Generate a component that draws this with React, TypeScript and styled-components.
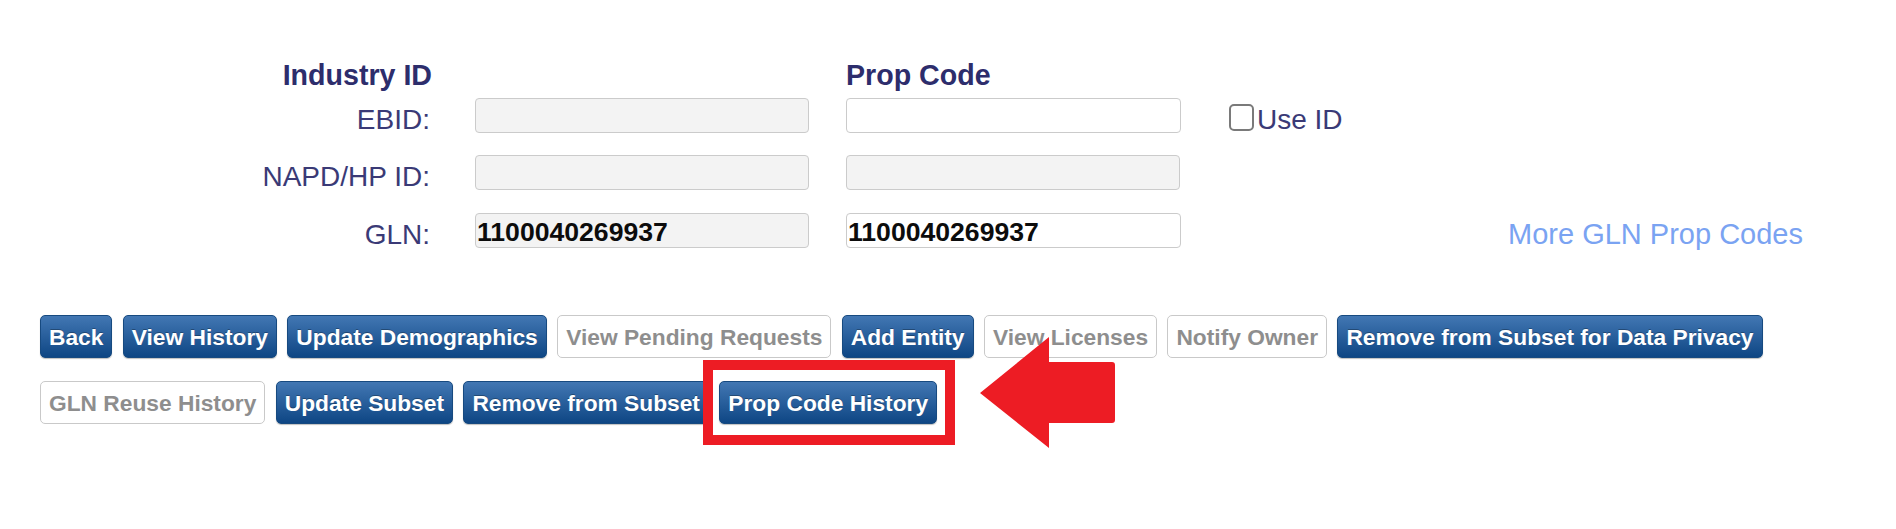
import React from "react";
import styled, { createGlobalStyle } from "styled-components";

const GlobalStyle = createGlobalStyle`
  html, body { margin: 0; padding: 0; background: #ffffff; }
  body { font-family: "Liberation Sans", Arial, sans-serif; }
`;

const Page = styled.div`
  position: relative;
  width: 1896px;
  height: 529px;
  padding-top: 59px;
  box-sizing: border-box;
  font-family: "Liberation Sans", Arial, sans-serif;
`;

const Form = styled.div`
  display: flex;
  flex-direction: column;
`;

const columns = "475px 371px 383px 279px auto";

const HeaderRow = styled.div`
  display: grid;
  grid-template-columns: ${columns};
  height: 33px;
`;

const FieldRow = styled.div<{ $top: number }>`
  display: grid;
  grid-template-columns: ${columns};
  grid-template-rows: 35px;
  margin-top: ${(p) => p.$top}px;
`;

const Heading = styled.div<{ $right?: boolean }>`
  font-size: 28.6px;
  line-height: 33px;
  font-weight: bold;
  color: #2d2d6c;
  text-align: ${(p) => (p.$right ? "right" : "left")};
  padding-right: ${(p) => (p.$right ? "43px" : "0")};
  white-space: nowrap;
`;

const Label = styled.label`
  font-size: 28px;
  line-height: 32px;
  color: #3a3a76;
  text-align: right;
  padding-right: 45px;
  margin-top: 6px;
  white-space: nowrap;
`;

const TextBox = styled.input<{ $locked?: boolean }>`
  box-sizing: border-box;
  width: ${(p) => (p.$locked ? "334px" : "335px")};
  height: 35px;
  margin: 0;
  padding: 4px 1px 0;
  border: 1px solid #cbcbcb;
  border-radius: 4px;
  background: ${(p) => (p.$locked ? "#f3f3f3" : "#ffffff")};
  font-family: "Liberation Sans", Arial, sans-serif;
  font-size: 26.6px;
  font-weight: bold;
  color: #0c0c0c;
  outline: none;
`;

const CheckWrap = styled.label`
  display: flex;
  align-items: flex-start;
  margin-top: 6px;
  font-size: 28px;
  line-height: 32px;
  color: #3a3a76;
  white-space: nowrap;
`;

const Box = styled.span`
  box-sizing: border-box;
  width: 25px;
  height: 27px;
  margin-right: 3px;
  border: 2px solid #7a7a7a;
  border-radius: 5px;
  background: #fff;
`;

const MoreLink = styled.a`
  font-size: 29px;
  line-height: 32px;
  margin-top: 5px;
  color: #7aa3f2;
  text-decoration: none;
  white-space: nowrap;
  cursor: pointer;
`;

const Actions = styled.div`
  display: flex;
  flex-direction: column;
  gap: 23px;
  margin-top: 67px;
  padding-left: 40px;
`;

const ButtonRow = styled.div`
  display: flex;
  gap: 10.4px;
`;

const Btn = styled.button<{ $off?: boolean }>`
  box-sizing: border-box;
  height: 43px;
  margin: 0;
  padding: 0 8px;
  font-family: "Liberation Sans", Arial, sans-serif;
  font-weight: bold;
  font-size: 22.75px;
  line-height: 26px;
  white-space: nowrap;
  border-radius: 5px;
  cursor: pointer;
  ${(p) =>
    p.$off
      ? `
    background: #ffffff;
    border: 1px solid #c9c9c9;
    color: #8e8e8e;
  `
      : `
    background: linear-gradient(#4277b3, #0e4684);
    border: 1px solid #174a80;
    color: #ffffff;
    text-shadow: 0 -1px 0 rgba(0, 0, 0, 0.3);
    box-shadow: 0 1px 1px rgba(0, 0, 0, 0.25);
  `}
`;

const Highlight = styled.div`
  position: absolute;
  left: 703px;
  top: 360px;
  width: 252px;
  height: 85px;
  box-sizing: border-box;
  border: 10px solid #ed1c24;
  pointer-events: none;
`;

const Arrow = styled.svg`
  position: absolute;
  left: 980px;
  top: 337px;
  width: 135px;
  height: 111px;
  pointer-events: none;
`;

export default function App() {
  return (
    <>
      <GlobalStyle />
      <Page>
        <Form>
          <HeaderRow>
            <Heading $right>Industry ID</Heading>
            <span />
            <Heading>Prop Code</Heading>
          </HeaderRow>
          <FieldRow $top={6}>
            <Label>EBID:</Label>
            <TextBox $locked readOnly value="" />
            <TextBox defaultValue="" />
            <CheckWrap>
              <Box />
              Use ID
            </CheckWrap>
          </FieldRow>
          <FieldRow $top={22}>
            <Label>NAPD/HP ID:</Label>
            <TextBox $locked readOnly value="" />
            <TextBox $locked readOnly value="" />
          </FieldRow>
          <FieldRow $top={23}>
            <Label>GLN:</Label>
            <TextBox $locked readOnly value="1100040269937" />
            <TextBox defaultValue="1100040269937" />
            <span />
            <MoreLink>More GLN Prop Codes</MoreLink>
          </FieldRow>
        </Form>
        <Actions>
          <ButtonRow>
            <Btn>Back</Btn>
            <Btn>View History</Btn>
            <Btn>Update Demographics</Btn>
            <Btn $off>View Pending Requests</Btn>
            <Btn>Add Entity</Btn>
            <Btn $off>View Licenses</Btn>
            <Btn $off>Notify Owner</Btn>
            <Btn>Remove from Subset for Data Privacy</Btn>
          </ButtonRow>
          <ButtonRow>
            <Btn $off>GLN Reuse History</Btn>
            <Btn>Update Subset</Btn>
            <Btn>Remove from Subset</Btn>
            <Btn>Prop Code History</Btn>
          </ButtonRow>
        </Actions>
        <Highlight />
        <Arrow viewBox="0 0 135 111">
          <path
            d="M0 56 L69 0 L69 25 L132 25 Q135 25 135 28 L135 83 Q135 86 132 86 L69 86 L69 111 Z"
            fill="#ed1c24"
          />
        </Arrow>
      </Page>
    </>
  );
}
